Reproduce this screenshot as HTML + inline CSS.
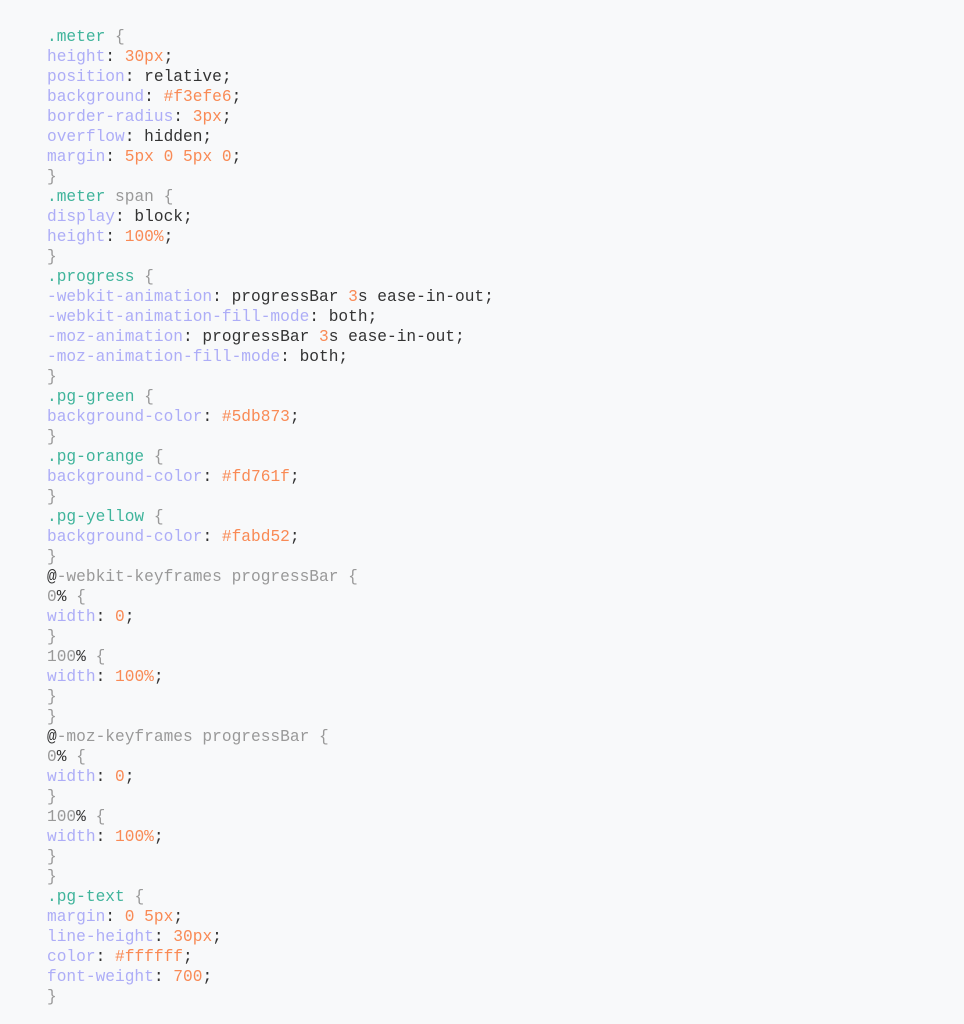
<!DOCTYPE html>
<html><head><meta charset="utf-8"><style>
html,body{margin:0;padding:0;background:#f8f9fa;width:964px;height:1024px;overflow:hidden}
pre{margin:0;position:absolute;left:47px;top:27px;font-family:"Liberation Mono",monospace;font-size:16.2px;line-height:20px;color:#333}
.s{color:#3fb49b}.p{color:#adadf7}.v{color:#f98a55}.g{color:#999}.d{color:#333}
</style></head><body><pre><span class="s">.meter</span> <span class="g">{</span>
<span class="p">height</span>: <span class="v">30px</span>;
<span class="p">position</span>: relative;
<span class="p">background</span>: <span class="v">#f3efe6</span>;
<span class="p">border-radius</span>: <span class="v">3px</span>;
<span class="p">overflow</span>: hidden;
<span class="p">margin</span>: <span class="v">5px 0 5px 0</span>;
<span class="g">}</span>
<span class="s">.meter</span> <span class="g">span {</span>
<span class="p">display</span>: block;
<span class="p">height</span>: <span class="v">100%</span>;
<span class="g">}</span>
<span class="s">.progress</span> <span class="g">{</span>
<span class="p">-webkit-animation</span>: progressBar <span class="v">3</span>s ease-in-out;
<span class="p">-webkit-animation-fill-mode</span>: both;
<span class="p">-moz-animation</span>: progressBar <span class="v">3</span>s ease-in-out;
<span class="p">-moz-animation-fill-mode</span>: both;
<span class="g">}</span>
<span class="s">.pg-green</span> <span class="g">{</span>
<span class="p">background-color</span>: <span class="v">#5db873</span>;
<span class="g">}</span>
<span class="s">.pg-orange</span> <span class="g">{</span>
<span class="p">background-color</span>: <span class="v">#fd761f</span>;
<span class="g">}</span>
<span class="s">.pg-yellow</span> <span class="g">{</span>
<span class="p">background-color</span>: <span class="v">#fabd52</span>;
<span class="g">}</span>
<span class="d">@</span><span class="g">-webkit-keyframes progressBar {</span>
<span class="g">0</span>% <span class="g">{</span>
<span class="p">width</span>: <span class="v">0</span>;
<span class="g">}</span>
<span class="g">100</span>% <span class="g">{</span>
<span class="p">width</span>: <span class="v">100%</span>;
<span class="g">}</span>
<span class="g">}</span>
<span class="d">@</span><span class="g">-moz-keyframes progressBar {</span>
<span class="g">0</span>% <span class="g">{</span>
<span class="p">width</span>: <span class="v">0</span>;
<span class="g">}</span>
<span class="g">100</span>% <span class="g">{</span>
<span class="p">width</span>: <span class="v">100%</span>;
<span class="g">}</span>
<span class="g">}</span>
<span class="s">.pg-text</span> <span class="g">{</span>
<span class="p">margin</span>: <span class="v">0 5px</span>;
<span class="p">line-height</span>: <span class="v">30px</span>;
<span class="p">color</span>: <span class="v">#ffffff</span>;
<span class="p">font-weight</span>: <span class="v">700</span>;
<span class="g">}</span></pre></body></html>
